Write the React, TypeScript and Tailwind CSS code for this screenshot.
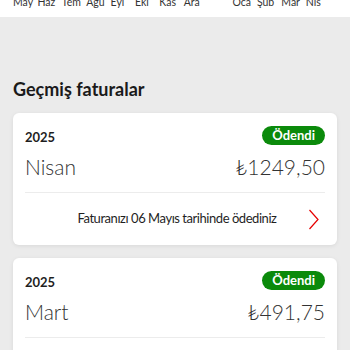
const aylar = ["May", "Haz", "Tem", "Ağu", "Eyl", "Eki", "Kas", "Ara", "", "Oca", "Şub", "Mar", "Nis"];

const faturalar = [
  { yil: "2025", ay: "Nisan", tutar: "₺1249,50", odeme: "Faturanızı 06 Mayıs tarihinde ödediniz" },
  { yil: "2025", ay: "Mart", tutar: "₺491,75", odeme: "Faturanızı 07 Nisan tarihinde ödediniz" },
];

export default function App() {
  return (
    <div className="w-[350px] h-[350px] overflow-hidden bg-[#ebebeb] text-[#1f1f1f]" style={{ fontFamily: 'Lato, "Noto Sans", sans-serif' }}>
      {/* AY ETİKETLERİ */}
      <div className="h-[17px] bg-white overflow-hidden pl-[13px]">
        <div className="flex -mt-[3px] text-[10.5px] leading-[11px] text-[#333]">
          {aylar.map((ay, i) => (
            <span key={i} className="w-[24.4px] shrink-0">
              {ay}
            </span>
          ))}
        </div>
      </div>

      {/* BAŞLIK */}
      <h2 className="px-[13px] pt-[60px] pb-[12px] text-[18px] leading-[24px] font-bold text-[#1a1a1a]">
        Geçmiş faturalar
      </h2>

      {/* FATURA KARTLARI */}
      <div className="flex flex-col gap-[13px] px-[13px]">
        {faturalar.map((f) => (
          <div key={f.ay} className="bg-white rounded-[6px] shadow-[0_1px_4px_rgba(0,0,0,0.08)] px-[12px] pt-[13px]">
            <div className="flex items-center justify-between h-[19px]">
              <span className="text-[13px] font-bold leading-none pt-[4px]">{f.yil}</span>
              <span className="bg-[#0b8a0b] text-white text-[13px] font-bold leading-[19px] h-[19px] px-[10px] rounded-full">
                Ödendi
              </span>
            </div>
            <div className="flex items-center justify-between h-[24px] mt-[10px] text-[21px] font-light text-[#333]">
              <span>{f.ay}</span>
              <span>{f.tutar}</span>
            </div>
            <div className="h-px bg-[#ececec] mt-[13px]" />
            <div className="relative h-[52px] flex items-center justify-center text-[13px] tracking-[-0.45px] text-[#1f1f1f]">
              <span className="pl-[4px]">{f.odeme}</span>
              <svg className="absolute right-[6px] top-[16px]" width="11" height="21" viewBox="0 0 11 21" fill="none">
                <path d="M1.5 1 L10 10.5 L1.5 20" stroke="#e60000" strokeWidth="1.2" />
              </svg>
            </div>
          </div>
        ))}
      </div>
    </div>
  );
}
